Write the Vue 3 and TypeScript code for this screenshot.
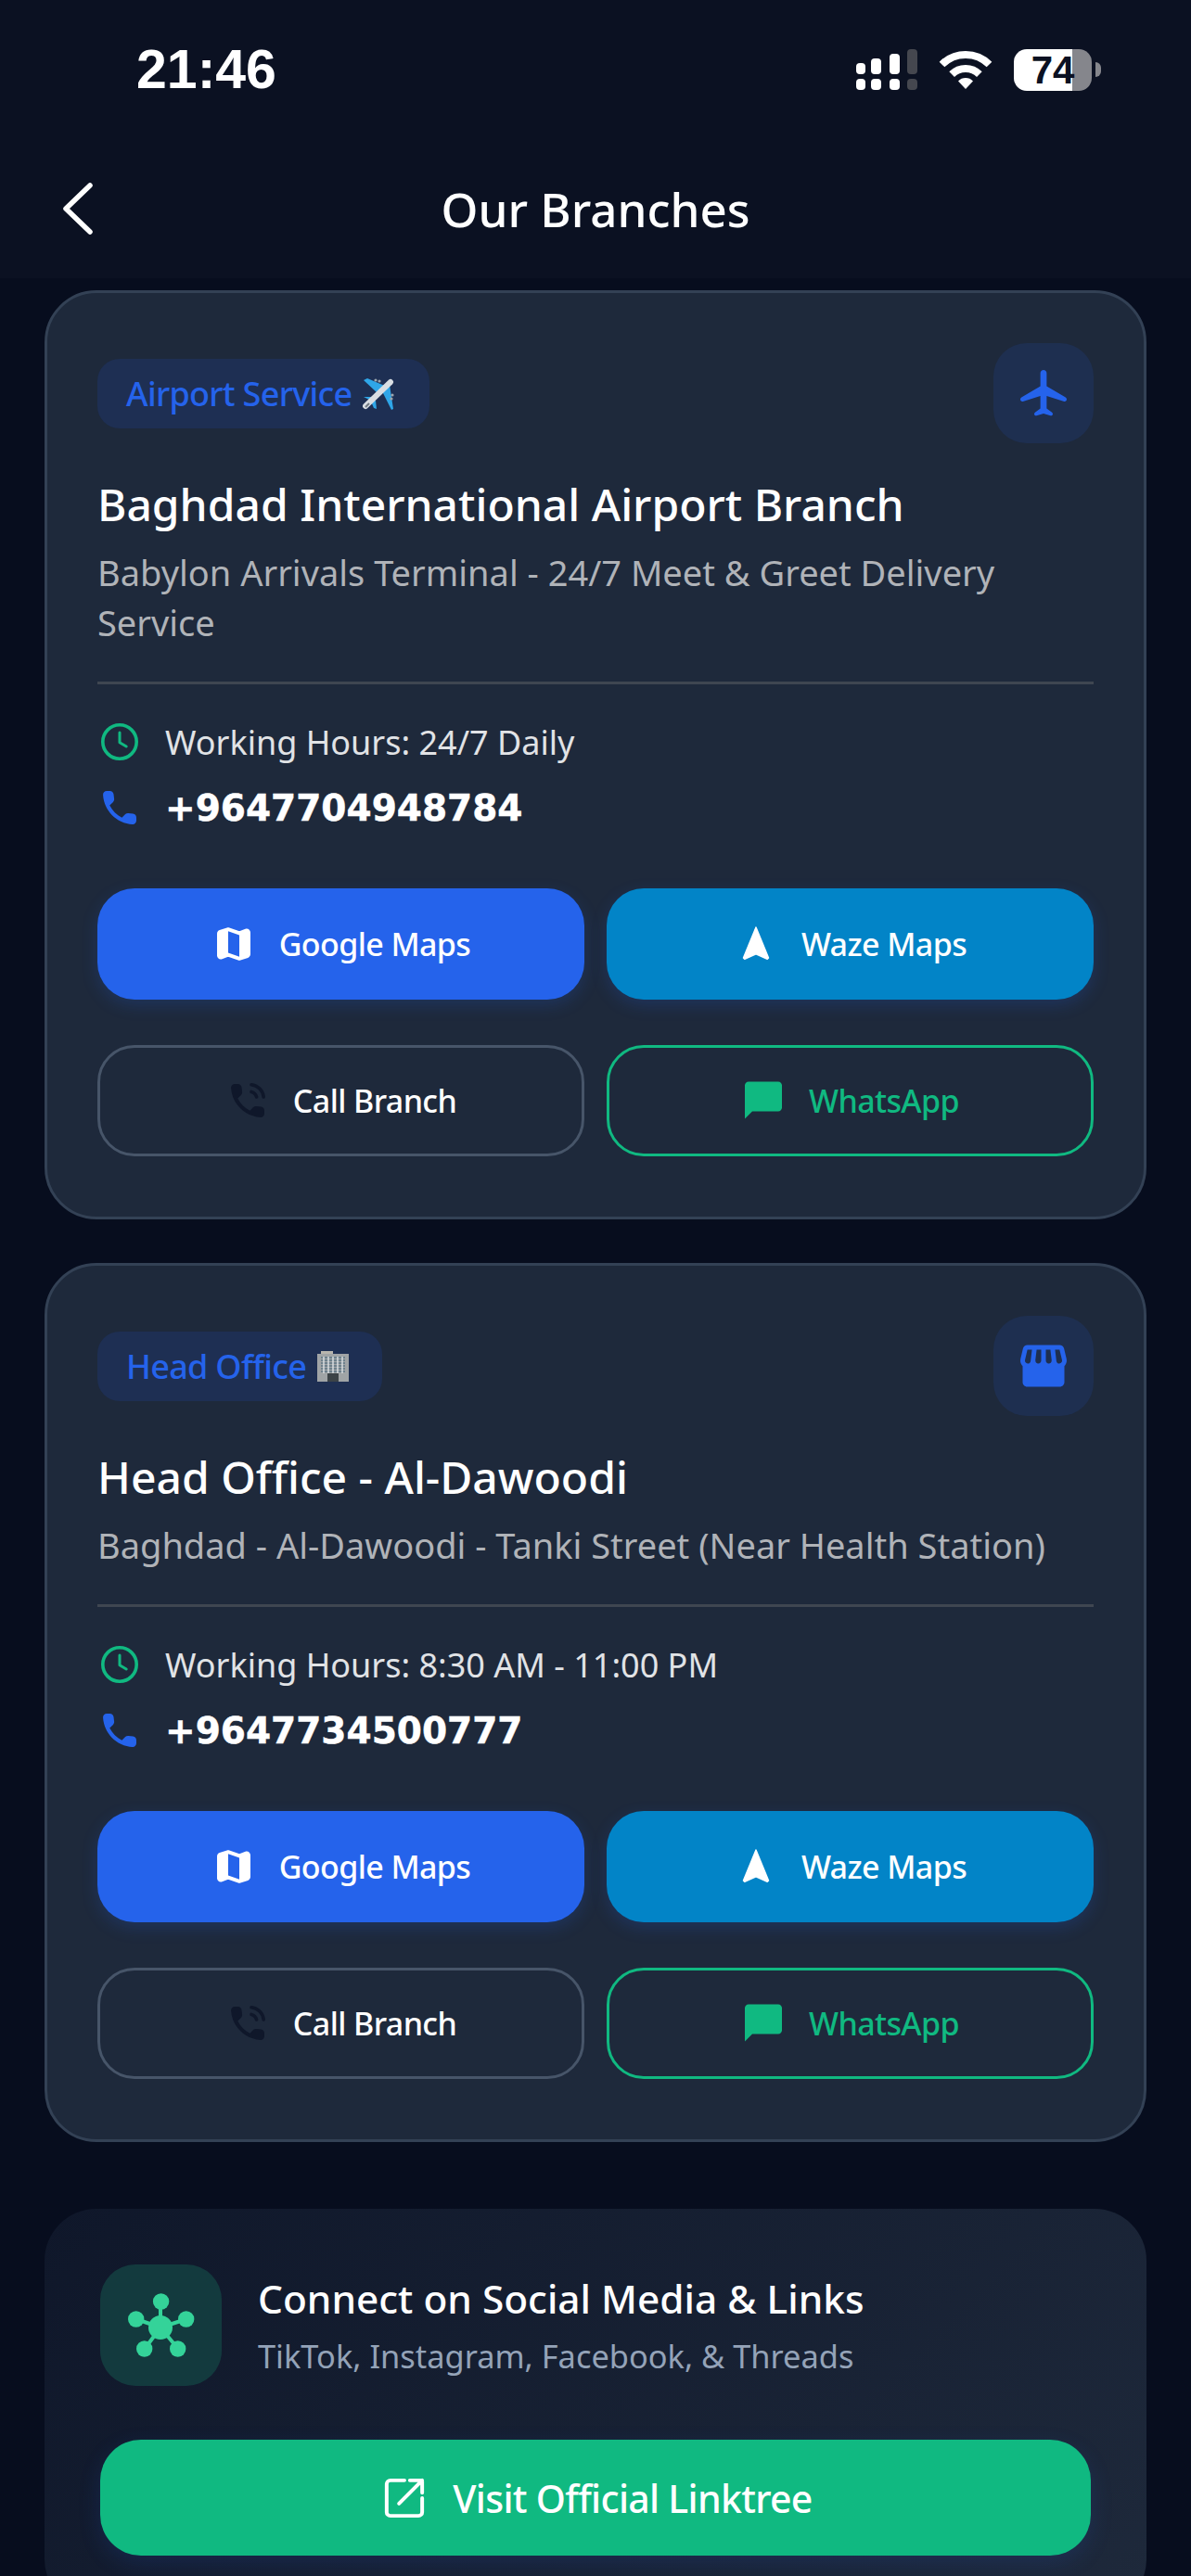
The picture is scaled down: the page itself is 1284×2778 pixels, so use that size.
<script setup lang="ts">
interface Branch {
  tag: string
  emoji: 'plane' | 'building'
  icon: 'flight' | 'store'
  name: string
  address: string
  hours: string
  phone: string
}

const branches: Branch[] = [
  {
    tag: 'Airport Service',
    emoji: 'plane',
    icon: 'flight',
    name: 'Baghdad International Airport Branch',
    address: 'Babylon Arrivals Terminal - 24/7 Meet & Greet Delivery Service',
    hours: 'Working Hours: 24/7 Daily',
    phone: '+9647704948784',
  },
  {
    tag: 'Head Office',
    emoji: 'building',
    icon: 'store',
    name: 'Head Office - Al-Dawoodi',
    address: 'Baghdad - Al-Dawoodi - Tanki Street (Near Health Station)',
    hours: 'Working Hours: 8:30 AM - 11:00 PM',
    phone: '+9647734500777',
  },
]

const callPath =
  'M19.23 15.26l-2.54-.29c-.61-.07-1.21.14-1.64.57l-1.84 1.84c-2.83-1.44-5.15-3.75-6.59-6.59l1.85-1.85c.43-.43.64-1.03.57-1.64l-.29-2.52c-.12-1.01-.97-1.77-1.99-1.77H5.03c-1.13 0-2.07.94-2 2.07.53 8.54 7.36 15.36 15.89 15.89 1.13.07 2.07-.87 2.07-2v-1.73c.01-1.01-.75-1.86-1.76-1.98z'
const flightPath =
  'M12 2c.75 0 1.35.6 1.35 1.35V9l8 4.7c.4.25.65.6.65 1 0 .6-.55 1-1.1.85l-7.55-2.35v5.4l2.3 1.7c.2.15.35.4.35.65 0 .5-.45.85-.95.75L12 20.8l-3.05.9c-.5.1-.95-.25-.95-.75 0-.25.15-.5.35-.65l2.3-1.7v-5.4L3.1 15.55c-.55.15-1.1-.25-1.1-.85 0-.4.25-.75.65-1l8-4.7V3.35C10.65 2.6 11.25 2 12 2z'
const storePath =
  'M21.9 8.89l-1.05-4.37c-.22-.9-1-1.52-1.91-1.52H5.05c-.9 0-1.69.63-1.9 1.52L2.1 8.89c-.24 1.02-.02 2.06.62 2.88.08.11.19.19.28.29V19c0 1.1.9 2 2 2h14c1.1 0 2-.9 2-2v-6.94c.09-.09.2-.18.28-.28.64-.82.87-1.87.62-2.89zm-2.99-3.9l1.05 4.37c.1.42.01.84-.25 1.17-.14.18-.44.47-.94.47-.61 0-1.14-.49-1.21-1.14L16.98 5l1.93-.01zM13 5h1.96l.54 4.52c.05.39-.07.78-.33 1.07-.22.26-.54.41-.95.41-.67 0-1.22-.59-1.22-1.31V5zM8.49 9.52L9.04 5H11v4.69c0 .72-.55 1.31-1.29 1.31-.34 0-.65-.15-.89-.41-.25-.29-.37-.68-.33-1.07zm-4.45-.16L5.05 5h1.97l-.58 4.86c-.08.65-.6 1.14-1.21 1.14-.49 0-.8-.29-.93-.47-.27-.32-.36-.75-.26-1.17z'
const mapPath =
  'M14.65 4.98l-5-1.75c-.42-.15-.88-.15-1.3-.01L4.36 4.56C3.55 4.84 3 5.6 3 6.46v11.85c0 1.41 1.41 2.37 2.72 1.86l2.93-1.14c.22-.09.47-.09.69-.01l5 1.75c.42.15.88.15 1.3.01l3.99-1.34c.81-.27 1.36-1.04 1.36-1.9V5.69c0-1.41-1.41-2.37-2.72-1.86l-2.93 1.14c-.22.08-.46.09-.69.01zM15 18.89l-6-2.11V5.11l6 2.11v11.67z'
</script>

<template>
  <div class="page">
    <header class="top">
      <div class="status">
        <span class="time">21:46</span>
        <div class="status-icons">
          <svg width="66" height="45" viewBox="0 0 66 45" fill="#fff">
            <rect x="0" y="15" width="10" height="12" rx="4" />
            <rect x="0" y="32" width="10" height="12" rx="4" />
            <rect x="16" y="10" width="11" height="17" rx="4" />
            <rect x="16" y="32" width="11" height="12" rx="4" />
            <rect x="36" y="5" width="11" height="22" rx="4" />
            <rect x="36" y="32" width="11" height="12" rx="4" />
            <rect x="55" y="0" width="11" height="27" rx="4" fill="#45474f" />
            <rect x="55" y="32" width="11" height="12" rx="4" fill="#45474f" />
          </svg>
          <svg class="wifi" width="58" height="42" viewBox="0 0 58 42" fill="none" stroke="#fff" stroke-width="8">
            <path d="M3.5 15.5A36 36 0 0 1 54.5 15.5" />
            <path d="M14.15 26.15A21 21 0 0 1 43.85 26.15" />
            <path d="M29 42L21 33.5A11 11 0 0 1 37 33.5Z" fill="#fff" stroke="none" />
          </svg>
          <div class="battery"><span>74</span></div>
          <i class="nub"></i>
        </div>
      </div>
      <div class="nav">
        <svg class="back" width="33" height="56" viewBox="0 0 33 56" fill="none" stroke="#fff" stroke-width="5.5" stroke-linecap="round" stroke-linejoin="round">
          <path d="M30 3L4 28L30 53" />
        </svg>
        <h1>Our Branches</h1>
      </div>
    </header>

    <main class="list">
      <section v-for="b in branches" :key="b.name" class="card">
        <div class="card-head">
          <span class="tag">
            {{ b.tag }}
            <svg v-if="b.emoji === 'plane'" class="emoji" width="36" height="38" viewBox="10 10 36 38">
              <path d="M11 15l4-2 21 9-10 7z" fill="#2fa6e8" />
              <path d="M43 46l-2 1-10-20 8-7z" fill="#2fa6e8" />
              <path d="M11 33h11l-3 4z" fill="#2fa6e8" />
              <path d="M24 37l1 9-3-1-3-7z" fill="#2fa6e8" />
              <path d="M13 43L40 17" stroke="#d9dee3" stroke-width="6" stroke-linecap="round" />
              <path d="M13 44l4-4" stroke="#6f7880" stroke-width="2" />
              <circle cx="24" cy="15" r="1.6" fill="#9ba5ad" />
              <circle cx="28" cy="16" r="1.6" fill="#9ba5ad" />
              <circle cx="42" cy="31" r="1.6" fill="#9ba5ad" />
              <circle cx="41" cy="35" r="1.6" fill="#9ba5ad" />
            </svg>
            <svg v-else class="emoji" width="34" height="33" viewBox="0 0 34 33">
              <rect x="4" y="0" width="13" height="3" fill="#b8b5ae" />
              <rect x="0" y="3" width="34" height="30" fill="#a0a4a6" />
              <path d="M4 7h26M4 10h26M4 13h26M4 16h26M4 19h26M4 22h26" stroke="#5d7584" stroke-width="1.4" />
              <path d="M7 6v18M12 6v18M17 6v18M22 6v18M27 6v18" stroke="#dfe3e6" stroke-width="1.4" />
              <rect x="11" y="24" width="12" height="9" fill="#3c4347" />
            </svg>
          </span>
          <div class="type-icon">
            <svg width="60" height="60" viewBox="0 0 24 24" fill="#2563eb">
              <path :d="b.icon === 'flight' ? flightPath : storePath" />
            </svg>
          </div>
        </div>

        <h2>{{ b.name }}</h2>
        <p class="address">{{ b.address }}</p>

        <div class="info">
          <div class="info-row">
            <svg width="48" height="48" viewBox="0 0 24 24" fill="none" stroke="#10b981" stroke-linecap="round">
              <circle cx="12" cy="12" r="9.1" stroke-width="1.8" />
              <path d="M12 7v5.4l3.6 2.1" stroke-width="1.5" stroke-linejoin="round" />
            </svg>
            <span class="hours">{{ b.hours }}</span>
          </div>
          <div class="info-row">
            <svg width="48" height="48" viewBox="0 0 24 24" fill="#2563eb"><path :d="callPath" /></svg>
            <span class="phone">{{ b.phone }}</span>
          </div>
        </div>

        <div class="actions">
          <a class="btn btn-google">
            <svg width="48" height="48" viewBox="0 0 24 24" fill="#fff"><path :d="mapPath" /></svg>
            Google Maps
          </a>
          <a class="btn btn-waze">
            <svg width="48" height="48" viewBox="-1.3 -1.3 26.6 26.6" fill="#fff" stroke="#fff" stroke-width=".8" stroke-linejoin="round">
              <path d="M12 2L4.5 20.29l.71.71L12 18l6.79 3 .71-.71z" />
            </svg>
            Waze Maps
          </a>
          <a class="btn btn-call">
            <svg width="48" height="48" viewBox="0 0 24 24" fill="#0f172a">
              <path :d="callPath" />
              <path d="M14 3.4a7.4 7.4 0 0 1 6.6 6.6M14 7.2a3.8 3.8 0 0 1 2.8 2.8" fill="none" stroke="#0f172a" stroke-width="1.8" stroke-linecap="round" />
            </svg>
            Call Branch
          </a>
          <a class="btn btn-chat">
            <svg width="48" height="48" viewBox="0 0 24 24" fill="#10b981">
              <path d="M20 2H4c-1.1 0-2 .9-2 2v18l4-4h14c1.1 0 2-.9 2-2V4c0-1.1-.9-2-2-2z" transform="translate(0 -.2)" />
            </svg>
            WhatsApp
          </a>
        </div>
      </section>

      <section class="social">
        <div class="social-head">
          <div class="social-icon">
            <svg width="72" height="70" viewBox="0 0 72 70" fill="#34d399" stroke="#34d399">
              <path d="M35 37V8M35 37L9 28M35 37L63 28M35 37L18 60M35 37L54 60" stroke-width="4" fill="none" />
              <circle cx="35" cy="37" r="13" stroke="none" />
              <circle cx="35.6" cy="9" r="8.7" stroke="none" />
              <circle cx="8.7" cy="28" r="8.7" stroke="none" />
              <circle cx="62.7" cy="28" r="8.7" stroke="none" />
              <circle cx="17.7" cy="60" r="8.7" stroke="none" />
              <circle cx="53.7" cy="60" r="8.7" stroke="none" />
            </svg>
          </div>
          <div>
            <h3>Connect on Social Media &amp; Links</h3>
            <p>TikTok, Instagram, Facebook, &amp; Threads</p>
          </div>
        </div>
        <a class="linktree">
          <svg width="56" height="56" viewBox="0 0 24 24" fill="none" stroke="#fff" stroke-width="1.7" stroke-linecap="round" stroke-linejoin="round">
            <path d="M12 3.8H5.5A1.7 1.7 0 0 0 3.8 5.5v13a1.7 1.7 0 0 0 1.7 1.7h13a1.7 1.7 0 0 0 1.7-1.7V12M14.5 3.8h5.7v5.7M20.2 3.8L9.5 14.5" />
          </svg>
          Visit Official Linktree
        </a>
      </section>
    </main>
  </div>
</template>

<style scoped>
.page {
  height: 2778px;
  overflow: hidden;
  background: #070d1e;
  color: #fff;
  font-family: "Noto Sans", "Open Sans", sans-serif;
}
.top { height: 300px; background: #0b1122; }
.status {
  height: 150px;
  display: flex;
  align-items: center;
  justify-content: space-between;
  padding: 0 97px 0 147px;
}
.time {
  font-family: "Liberation Sans", sans-serif;
  font-weight: 700;
  font-size: 59px;
}
.status-icons { display: flex; align-items: center; }
.wifi { margin: 0 23px 0 23px; }
.battery {
  width: 84px;
  height: 45px;
  border-radius: 14px;
  background: linear-gradient(90deg, #fff 75%, #85868c 75%);
  color: #0b1122;
  font-family: "Liberation Sans", sans-serif;
  font-weight: 700;
  font-size: 42px;
  line-height: 45px;
  text-align: center;
}
.nub {
  width: 6px;
  height: 16px;
  margin-left: 4px;
  border-radius: 0 8px 8px 0;
  background: #85868c;
}
.nav {
  position: relative;
  height: 150px;
  display: flex;
  align-items: center;
  justify-content: center;
}
.back { position: absolute; left: 67px; top: 47px; }
h1 { margin: 0; font-size: 51px; font-weight: 500; }

.list {
  display: flex;
  flex-direction: column;
  gap: 47px;
  padding: 13px 48px 0;
}
.card {
  border: 3px solid #334155;
  border-radius: 56px;
  background: #1e293b;
  padding: 54px 54px 65px;
}
.card-head {
  display: flex;
  align-items: center;
  justify-content: space-between;
}
.tag {
  display: flex;
  align-items: center;
  gap: 12px;
  height: 75px;
  padding: 0 36px 0 31px;
  border-radius: 24px;
  background: #1e2f53;
  color: #2563eb;
  font-size: 36px;
  font-weight: 500;
  letter-spacing: -0.7px;
}
.type-icon {
  width: 108px;
  height: 108px;
  border-radius: 36px;
  background: #1e2f50;
  display: flex;
  align-items: center;
  justify-content: center;
}
h2 {
  margin: 30px 0 0;
  font-size: 48px;
  line-height: 72px;
  font-weight: 500;
}
.address {
  margin: 10px 0 0;
  font-size: 38px;
  line-height: 54px;
  color: #b0b3b8;
}
.info {
  margin-top: 37px;
  padding-top: 38px;
  border-top: 3px solid #3f4651;
  display: flex;
  flex-direction: column;
  gap: 23px;
}
.info-row { display: flex; align-items: center; gap: 25px; height: 48px; }
.hours { font-size: 36px; color: #e1e3e6; }
.phone {
  font-family: "DejaVu Sans", sans-serif;
  font-weight: 700;
  font-size: 39px;
  -webkit-text-stroke: 0.5px #fff;
}
.actions {
  margin-top: 63px;
  display: grid;
  grid-template-columns: 1fr 1fr;
  gap: 49px 24px;
}
.btn {
  height: 120px;
  border-radius: 40px;
  box-sizing: border-box;
  display: flex;
  align-items: center;
  justify-content: center;
  gap: 25px;
  font-size: 34px;
  font-weight: 500;
  letter-spacing: -0.6px;
}
.btn-google { background: #2563eb; box-shadow: 0 6px 18px rgba(37, 99, 235, 0.2); }
.btn-waze { background: #0284c7; box-shadow: 0 6px 18px rgba(37, 99, 235, 0.2); }
.btn-call { border: 3px solid #475569; }
.btn-chat { border: 3px solid #10b981; color: #10b981; }

.social {
  margin-top: 25px;
  border-radius: 56px;
  background: linear-gradient(135deg, #0f172a, #1e293b);
  padding: 60px 60px 60px;
}
.social-head { display: flex; align-items: center; gap: 39px; }
.social-icon {
  width: 131px;
  height: 131px;
  border-radius: 38px;
  background: #133a3e;
  display: flex;
  align-items: center;
  justify-content: center;
}
h3 { margin: 0; font-size: 42.4px; line-height: 60px; font-weight: 500; }
.social p { margin: 7px 0 0; font-size: 34.4px; line-height: 50px; color: #94a3b8; }
.linktree {
  margin-top: 58px;
  height: 125px;
  border-radius: 44px;
  background: #10b981;
  box-shadow: 0 8px 24px rgba(37, 99, 235, 0.15);
  display: flex;
  align-items: center;
  justify-content: center;
  gap: 24px;
  font-size: 41px;
  font-weight: 500;
  letter-spacing: -0.7px;
}
</style>
